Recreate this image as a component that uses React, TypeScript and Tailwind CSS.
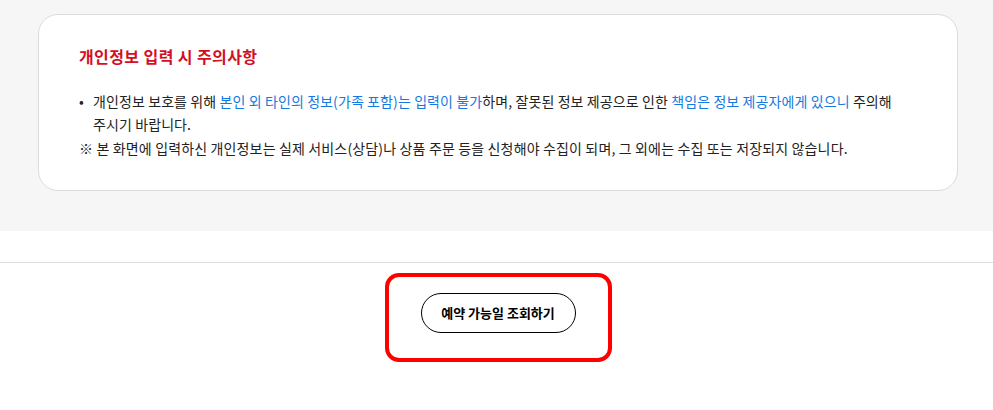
export default function App() {
  return (
    <div
      className="w-[993px] h-[410px] bg-white text-[#222]"
      style={{ fontFamily: '"Noto Sans CJK KR", "Noto Sans", sans-serif' }}
    >
      <section className="bg-[#f6f6f6] pt-[14px] pb-[40px]">
        <div className="ml-[38px] w-[920px] rounded-[20px] border border-[#dcdcdc] bg-white pl-[40px] pr-[30px] pt-[29px] pb-[29px]">
          <h3 className="text-[16px] leading-6 font-bold text-[#d40f24] tracking-[0.4px]">
            개인정보 입력 시 주의사항
          </h3>
          <ul className="mt-[22px] text-[14px] leading-[23px] tracking-[0.1px]">
            <li className="relative pl-[14px]">
              <span className="absolute left-0 top-0">•</span>
              개인정보 보호를 위해{" "}
              <span className="text-[#1479e0]">본인 외 타인의 정보(가족 포함)는 입력이 불가</span>
              하며, 잘못된 정보 제공으로 인한{" "}
              <span className="text-[#1479e0]">책임은 정보 제공자에게 있으니</span> 주의해
              <br />
              주시기 바랍니다.
            </li>
          </ul>
          <p className="text-[14px] leading-[25px] tracking-[0.15px]">
            ※ 본 화면에 입력하신 개인정보는 실제 서비스(상담)나 상품 주문 등을 신청해야 수집이 되며, 그 외에는 수집 또는 저장되지 않습니다.
          </p>
        </div>
      </section>
      <div className="h-[31px]" />
      <div className="border-t border-[#dddddd] pt-[10px] flex justify-center">
        <div className="ml-[3px] rounded-[14px] border-4 border-[#ff0000] px-[32px] pt-[16px] pb-[25px]">
          <button className="w-[155px] h-[40px] rounded-full border border-black bg-white text-[13px] font-bold text-black">
            예약 가능일 조회하기
          </button>
        </div>
      </div>
    </div>
  );
}
